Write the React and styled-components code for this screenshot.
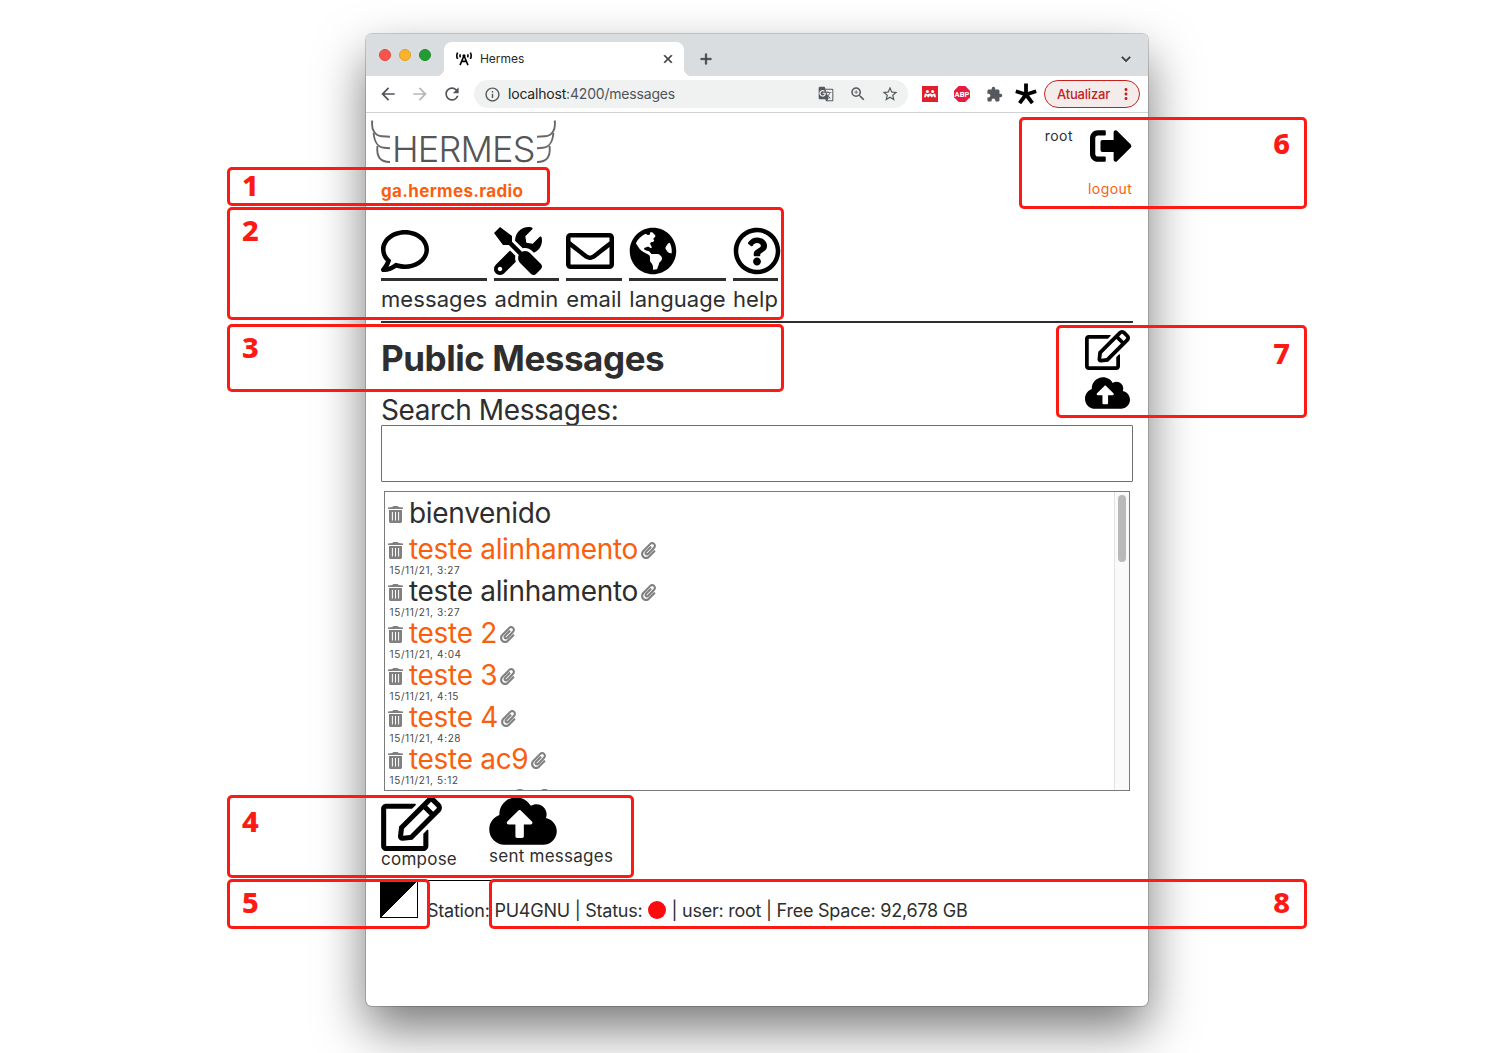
import React from 'react';
import styled, { createGlobalStyle } from 'styled-components';
import {
  FaBroadcastTower, FaRegComment, FaTools, FaRegEnvelope, FaGlobeAmericas,
  FaRegQuestionCircle, FaSignOutAlt, FaRegEdit, FaCloudUploadAlt, FaPaperclip,
} from 'react-icons/fa';
import {
  MdArrowBack, MdArrowForward, MdRefresh, MdInfoOutline, MdGTranslate,
  MdZoomIn, MdStarBorder, MdExtension, MdClose, MdAdd, MdExpandMore, MdMoreVert,
} from 'react-icons/md';

const ink = '#2e2e2e';
const orange = '#f95f0e';
const red = '#fb1a14';

const GlobalStyle = createGlobalStyle`
  * { box-sizing: border-box; }
  body {
    margin: 0;
    background: #fff;
    color: ${ink};
    font-family: Inter, "Liberation Sans", sans-serif;
    overflow: hidden;
  }
  svg { display: block; flex: none; }
`;

const Stage = styled.div`
  position: relative;
  width: 1497px;
  height: 1053px;
  padding: 34px 349px 0 366px;
  overflow: hidden;
`;

const Window = styled.div`
  width: 782px;
  height: 972px;
  display: flex;
  flex-direction: column;
  background: #fff;
  border-radius: 6px;
  box-shadow: 0 0 0 1px rgba(0, 0, 0, 0.18), 0 23px 50px rgba(0, 0, 0, 0.53);
`;

/* ---------- browser chrome ---------- */

const TabStrip = styled.div`
  height: 42px;
  display: flex;
  padding: 8px 14px 0 13px;
  background: #d9dde0;
  border-radius: 6px 6px 0 0;
`;

const Lights = styled.div`
  display: flex;
  gap: 8px;
  padding-top: 7px;
  width: 65px;
`;

const Light = styled.span`
  width: 12px;
  height: 12px;
  border-radius: 50%;
  background: ${(p) => p.$color};
  border: 1px solid ${(p) => p.$edge};
`;

const Tab = styled.div`
  position: relative;
  width: 240px;
  height: 34px;
  display: flex;
  align-items: center;
  gap: 8px;
  padding: 0 9px 0 12px;
  background: #fff;
  border-radius: 8px 8px 0 0;
  &::before,
  &::after {
    content: '';
    position: absolute;
    bottom: 0;
    width: 8px;
    height: 8px;
  }
  &::before {
    left: -8px;
    background: radial-gradient(circle at 0 0, transparent 8px, #fff 8.5px);
  }
  &::after {
    right: -8px;
    background: radial-gradient(circle at 100% 0, transparent 8px, #fff 8.5px);
  }
`;

const TabTitle = styled.span`
  flex: 1;
  margin-top: -1px;
  font-size: 12px;
  letter-spacing: -0.05px;
  color: #26282b;
`;

const CloseIcon = styled(MdClose)`
  width: 14px;
  height: 14px;
  color: #3c4043;
  path:not([fill='none']) { stroke: currentColor; stroke-width: 1px; }
`;

const StripButton = styled.span`
  height: 34px;
  display: flex;
  align-items: center;
  color: #3c4043;
  margin-left: ${(p) => (p.$end ? 'auto' : '13px')};
  margin-right: ${(p) => (p.$end ? '-1px' : '0')};
  path:not([fill='none']) { stroke: currentColor; stroke-width: 0.7px; }
`;

const Toolbar = styled.div`
  height: 37px;
  display: flex;
  align-items: center;
  padding: 0 8px 0 12px;
  border-bottom: 1px solid #d0d1d2;
`;

const NavButton = styled.span`
  width: 32px;
  color: ${(p) => (p.$dim ? '#b4b6b9' : '#50545a')};
`;

const Omnibox = styled.div`
  width: 434px;
  height: 28px;
  display: flex;
  align-items: center;
  padding: 0 9px 0 10px;
  border-radius: 14px;
  background: #f0f2f2;
  color: #55595d;
`;

const Address = styled.span`
  flex: 1;
  margin: -1px 0 0 7px;
  font-size: 14px;
  letter-spacing: -0.19px;
  color: #505458;
  b { font-weight: 400; color: #1d1f22; }
`;

const OmniboxIcons = styled.div`
  display: flex;
  align-items: center;
  gap: 14.5px;
`;

const Extensions = styled.div`
  display: flex;
  align-items: center;
  margin-left: 14px;
  gap: 16px;
  color: #55595d;
  svg:last-child { margin-left: -4px; }
`;

const UpdateButton = styled.div`
  width: 96px;
  height: 28px;
  display: flex;
  align-items: center;
  justify-content: space-between;
  margin-left: auto;
  padding: 0 4px 0 12px;
  border: 1px solid #c5221f;
  border-radius: 14px;
  background: #f4ecea;
  color: #c5221f;
  font-size: 13px;
  font-weight: 500;
  letter-spacing: -0.2px;
`;

/* ---------- page ---------- */

const Page = styled.main`
  flex: 1;
  display: flex;
  flex-direction: column;
  padding: 0 15px;
`;

const Header = styled.header`
  height: 114px;
  display: flex;
  justify-content: space-between;
`;

const Logo = styled.div`
  height: 44px;
  display: flex;
  align-items: flex-start;
  margin: 7px 0 17px -10px;
`;

const LogoText = styled.span`
  width: 145px;
  padding-left: 1px;
  font-size: 36px;
  font-weight: 300;
  line-height: 44px;
  margin-top: 7px;
  letter-spacing: -0.8px;
  color: #555;
`;

const HostName = styled.a`
  display: block;
  font-size: 17px;
  font-weight: 700;
  line-height: 20px;
  letter-spacing: 0.34px;
  color: ${orange};
`;

const Account = styled.div`
  display: flex;
  align-items: flex-start;
  padding-top: 12px;
  font-size: 14px;
  line-height: 22px;
  letter-spacing: 0.45px;
`;

const Logout = styled.a`
  width: 45px;
  margin-left: 15px;
  color: ${orange};
  svg { color: #000; margin: 0 0 11px 2px; }
`;

const Menu = styled.nav`
  display: flex;
  gap: 7px;
  height: 94px;
`;

const MenuItem = styled.a`
  width: ${(p) => p.$width}px;
  color: #000;
`;

const MenuIcon = styled.div`
  height: 54px;
  border-bottom: 3px solid ${ink};
`;

const MenuLabel = styled.div`
  font-size: 22px;
  line-height: 36px;
  letter-spacing: 0.08px;
  text-align: center;
  color: ${ink};
`;

const Heading = styled.section`
  display: flex;
  justify-content: space-between;
  height: 104px;
  border-top: 2px solid ${ink};
`;

const Title = styled.h1`
  margin: 0;
  padding-bottom: 2px;
  font-size: 35px;
  font-weight: 700;
  line-height: 70px;
  letter-spacing: -0.45px;
`;

const SearchLabel = styled.label`
  display: block;
  font-size: 28px;
  line-height: 30px;
  letter-spacing: -0.42px;
  white-space: nowrap;
`;

const QuickActions = styled.div`
  display: flex;
  flex-direction: column;
  gap: 5px;
  padding: 7px 3px 0 0;
  color: #000;
`;

const ComposeIcon = styled(FaRegEdit)`
  width: ${(p) => (p.$large ? 61 : 45)}px;
  height: ${(p) => (p.$large ? 54 : 40)}px;
`;

const SentIcon = styled(FaCloudUploadAlt)`
  width: ${(p) => (p.$large ? 68 : 45)}px;
  height: ${(p) => (p.$large ? 54 : 36)}px;
`;

const SearchBox = styled.div`
  height: 57px;
  border: 1px solid #6f6f6f;
  border-radius: 1px;
`;

const List = styled.section`
  height: 300px;
  display: flex;
  margin: 9px 3px 0;
  border: 1px solid #7b7b7b;
  overflow: hidden;
`;

const Rows = styled.div`
  flex: 1;
  padding: 6px 0 0 3px;
`;

const Row = styled.div`
  height: ${(p) => (p.$dated ? 42 : 36)}px;
  &:last-child { margin-top: -1px; opacity: 0.6; }
`;

const Subject = styled.div`
  height: 30px;
  display: flex;
  align-items: center;
  font-size: 28px;
  line-height: 30px;
  letter-spacing: -0.31px;
  color: ${(p) => (p.$unread ? orange : ink)};
  white-space: nowrap;
  svg { color: #808080; margin-top: 3px; }
  span { margin: 0 2px 0 6px; }
`;

const Stamp = styled.div`
  padding-left: 1.5px;
  font-size: 10px;
  line-height: 12px;
  letter-spacing: 0.62px;
  color: #4a4a4a;
`;

const Track = styled.div`
  width: 15px;
  padding: 3px 3px 0;
  border-left: 1px solid #e2e2e2;
  background: #fafafa;
`;

const Thumb = styled.div`
  width: 8px;
  height: 67px;
  border-radius: 4px;
  background: #b9b9b9;
`;

const Actions = styled.div`
  display: flex;
  height: 89px;
`;

const Action = styled.a`
  width: ${(p) => p.$width}px;
  padding-top: ${(p) => p.$top}px;
  font-size: 17px;
  line-height: 16px;
  letter-spacing: 0.25px;
  white-space: nowrap;
  svg { color: #000; }
`;

const Footer = styled.footer`
  display: flex;
  gap: 9px;
  margin-left: -1px;
`;

const Contrast = styled.div`
  width: 38px;
  height: 38px;
  border: 1px solid #000;
  background: linear-gradient(135deg, #000 50%, #fff 50.5%);
`;

const Status = styled.div`
  flex: 1;
  display: flex;
  align-items: center;
  height: 60px;
  margin-left: 1px;
  border-top: 1px solid #000;
  font-size: 18px;
  letter-spacing: -0.24px;
  white-space: nowrap;
  span:first-child { margin-left: -1px; }
`;

const Dot = styled.i`
  width: 18px;
  height: 18px;
  margin: -2px 5px 0 6px;
  border-radius: 50%;
  background: #fb0a0e;
`;

/* ---------- numbered callouts over the window ---------- */

const Callout = styled.div`
  position: absolute;
  left: ${(p) => p.$x}px;
  top: ${(p) => p.$y}px;
  width: ${(p) => p.$w}px;
  height: ${(p) => p.$h}px;
  display: flex;
  justify-content: ${(p) => (p.$right ? 'flex-end' : 'flex-start')};
  padding: ${(p) => p.$drop}px 14px 0 12px;
  border: 3px solid ${red};
  border-radius: 5px;
  color: ${red};
  font: 800 29px/30px "Noto Sans", "Open Sans", sans-serif;
`;

const menu = [
  ['messages', 106, FaRegComment],
  ['admin', 65, FaTools],
  ['email', 56, FaRegEnvelope],
  ['language', 97, FaGlobeAmericas],
  ['help', 45, FaRegQuestionCircle],
];

const messages = [
  { subject: 'bienvenido' },
  { subject: 'teste alinhamento', date: '15/11/21, 3:27', unread: true },
  { subject: 'teste alinhamento', date: '15/11/21, 3:27' },
  { subject: 'teste 2', date: '15/11/21, 4:04', unread: true },
  { subject: 'teste 3', date: '15/11/21, 4:15', unread: true },
  { subject: 'teste 4', date: '15/11/21, 4:28', unread: true },
  { subject: 'teste ac9', date: '15/11/21, 5:12', unread: true },
];

const callouts = [
  { n: 1, x: 227, y: 167, w: 323, h: 39, drop: 0 },
  { n: 2, x: 227, y: 207, w: 557, h: 113, drop: 5 },
  { n: 3, x: 227, y: 324, w: 557, h: 68, drop: 5 },
  { n: 4, x: 227, y: 795, w: 407, h: 83, drop: 8 },
  { n: 5, x: 227, y: 879, w: 203, h: 50, drop: 5 },
  { n: 6, x: 1019, y: 117, w: 288, h: 92, drop: 8, right: true },
  { n: 7, x: 1056, y: 325, w: 251, h: 93, drop: 10, right: true },
  { n: 8, x: 489, y: 879, w: 818, h: 50, drop: 5, right: true },
];

const Wing = ({ flip }) => (
  <svg width="20" height="44" viewBox="0 0 20 44" fill="none" stroke="#686868" strokeWidth="1.9">
    <g transform={flip ? 'matrix(-1 0 0 1 20 0)' : undefined}>
      <path d="M1.3 0.5C0 10 4 16 11 16.3L19 16.7" />
      <path d="M2.6 13C3.4 23 8 27.5 13 27.8L19 28.2" />
      <path d="M6.4 26C5.4 37 9 41.8 19 42" />
    </g>
  </svg>
);

const Trash = () => (
  <svg width="15" height="17" viewBox="0 0 15 17" fill="currentColor">
    <path d="M4.5 0.9Q4.7 0 5.6 0h3.8q.9 0 1.1.9l4.5.5v1.7H0V1.4z" />
    <path fillRule="evenodd" d="M1 3.9h13v11.7q0 1.4-1.4 1.4H2.4Q1 17 1 15.6zM3.9 6v8.6h1V6zm3.1 0v8.6h1V6zm3.1 0v8.6h1V6z" />
  </svg>
);

const Readers = () => (
  <svg width="16" height="16" viewBox="0 0 16 16">
    <rect width="16" height="16" fill="#e2202c" />
    <g fill="#fff">
      <circle cx="5.4" cy="5.6" r="1.5" />
      <circle cx="10.6" cy="5.6" r="1.5" />
      <path d="M2 11.3l.6-3q.4-1 1.3-.8l1.6.9 1.5-.6q1-.4 2 0l1.5.6 1.6-.9q.9-.2 1.3.8l.6 3h-2l-.4-2-1.4 2h-1.1L8 9.2l-1.1 2.1H5.8l-1.4-2-.4 2z" />
    </g>
  </svg>
);

const Blocker = () => (
  <svg width="16" height="16" viewBox="0 0 16 16">
    <path d="M4.7 0h6.6L16 4.7v6.6L11.3 16H4.7L0 11.3V4.7z" fill="#ea1b3d" />
    <text x="8" y="10.8" fontSize="7.6" fontWeight="700" fill="#fff" textAnchor="middle" fontFamily="Roboto, sans-serif">ABP</text>
  </svg>
);

const Asterisk = () => (
  <svg width="22" height="22" viewBox="0 0 22 22" stroke="#000" strokeWidth="3.8" fill="none">
    <path d="M11 11.5V0.6M11 11.5L21.2 8.3M11 11.5L17.4 20.2M11 11.5L4.6 20.2M11 11.5L0.8 8.3" />
  </svg>
);

export default function App() {
  return (
    <Stage>
      <GlobalStyle />
      <Window>
        <TabStrip>
          <Lights>
            <Light $color="#f7544d" $edge="#e2463f" />
            <Light $color="#fbb429" $edge="#e0a023" />
            <Light $color="#259b33" $edge="#1c8a2a" />
          </Lights>
          <Tab>
            <FaBroadcastTower size={16} color="#000" />
            <TabTitle>Hermes</TabTitle>
            <CloseIcon />
          </Tab>
          <StripButton><MdAdd size={18} /></StripButton>
          <StripButton $end><MdExpandMore size={18} /></StripButton>
        </TabStrip>
        <Toolbar>
          <NavButton><MdArrowBack size={20} /></NavButton>
          <NavButton $dim><MdArrowForward size={20} /></NavButton>
          <NavButton><MdRefresh size={20} /></NavButton>
          <Omnibox>
            <MdInfoOutline size={17} />
            <Address><b>localhost</b>:4200/messages</Address>
            <OmniboxIcons>
              <MdGTranslate size={16} />
              <MdZoomIn size={18} />
              <MdStarBorder size={18} />
            </OmniboxIcons>
          </Omnibox>
          <Extensions>
            <Readers />
            <Blocker />
            <MdExtension size={17} />
            <Asterisk />
          </Extensions>
          <UpdateButton>
            Atualizar
            <MdMoreVert size={18} />
          </UpdateButton>
        </Toolbar>

        <Page>
          <Header>
            <div>
              <Logo>
                <Wing />
                <LogoText>HERMES</LogoText>
                <Wing flip />
              </Logo>
              <HostName>ga.hermes.radio</HostName>
            </div>
            <Account>
              root
              <Logout>
                <FaSignOutAlt size={42} />
                logout
              </Logout>
            </Account>
          </Header>

          <Menu>
            {menu.map(([label, width, Icon]) => (
              <MenuItem key={label} $width={width}>
                <MenuIcon><Icon size={48} /></MenuIcon>
                <MenuLabel>{label}</MenuLabel>
              </MenuItem>
            ))}
          </Menu>

          <Heading>
            <div>
              <Title>Public Messages</Title>
              <SearchLabel>Search Messages:</SearchLabel>
            </div>
            <QuickActions>
              <ComposeIcon />
              <SentIcon />
            </QuickActions>
          </Heading>
          <SearchBox />

          <List>
            <Rows>
              {messages.map((m, i) => (
                <Row key={i} $dated={m.date}>
                  <Subject $unread={m.unread}>
                    <Trash />
                    <span>{m.subject}</span>
                    {m.date && <FaPaperclip size={17} />}
                  </Subject>
                  {m.date && <Stamp>{m.date}</Stamp>}
                </Row>
              ))}
              <Row $dated>
                <Subject><Trash /><span>teste ac9 2</span></Subject>
              </Row>
            </Rows>
            <Track><Thumb /></Track>
          </List>

          <Actions>
            <Action $width={108} $top={6}>
              <ComposeIcon $large />
              compose
            </Action>
            <Action $width={130} $top={3}>
              <SentIcon $large />
              sent messages
            </Action>
          </Actions>

          <Footer>
            <Contrast />
            <Status>
              <span>Station: PU4GNU | Status:</span>
              <Dot />
              <span>| user: root | Free Space: 92,678 GB</span>
            </Status>
          </Footer>
        </Page>
      </Window>

      {callouts.map((c) => (
        <Callout key={c.n} $x={c.x} $y={c.y} $w={c.w} $h={c.h} $drop={c.drop} $right={c.right}>
          {c.n}
        </Callout>
      ))}
    </Stage>
  );
}
